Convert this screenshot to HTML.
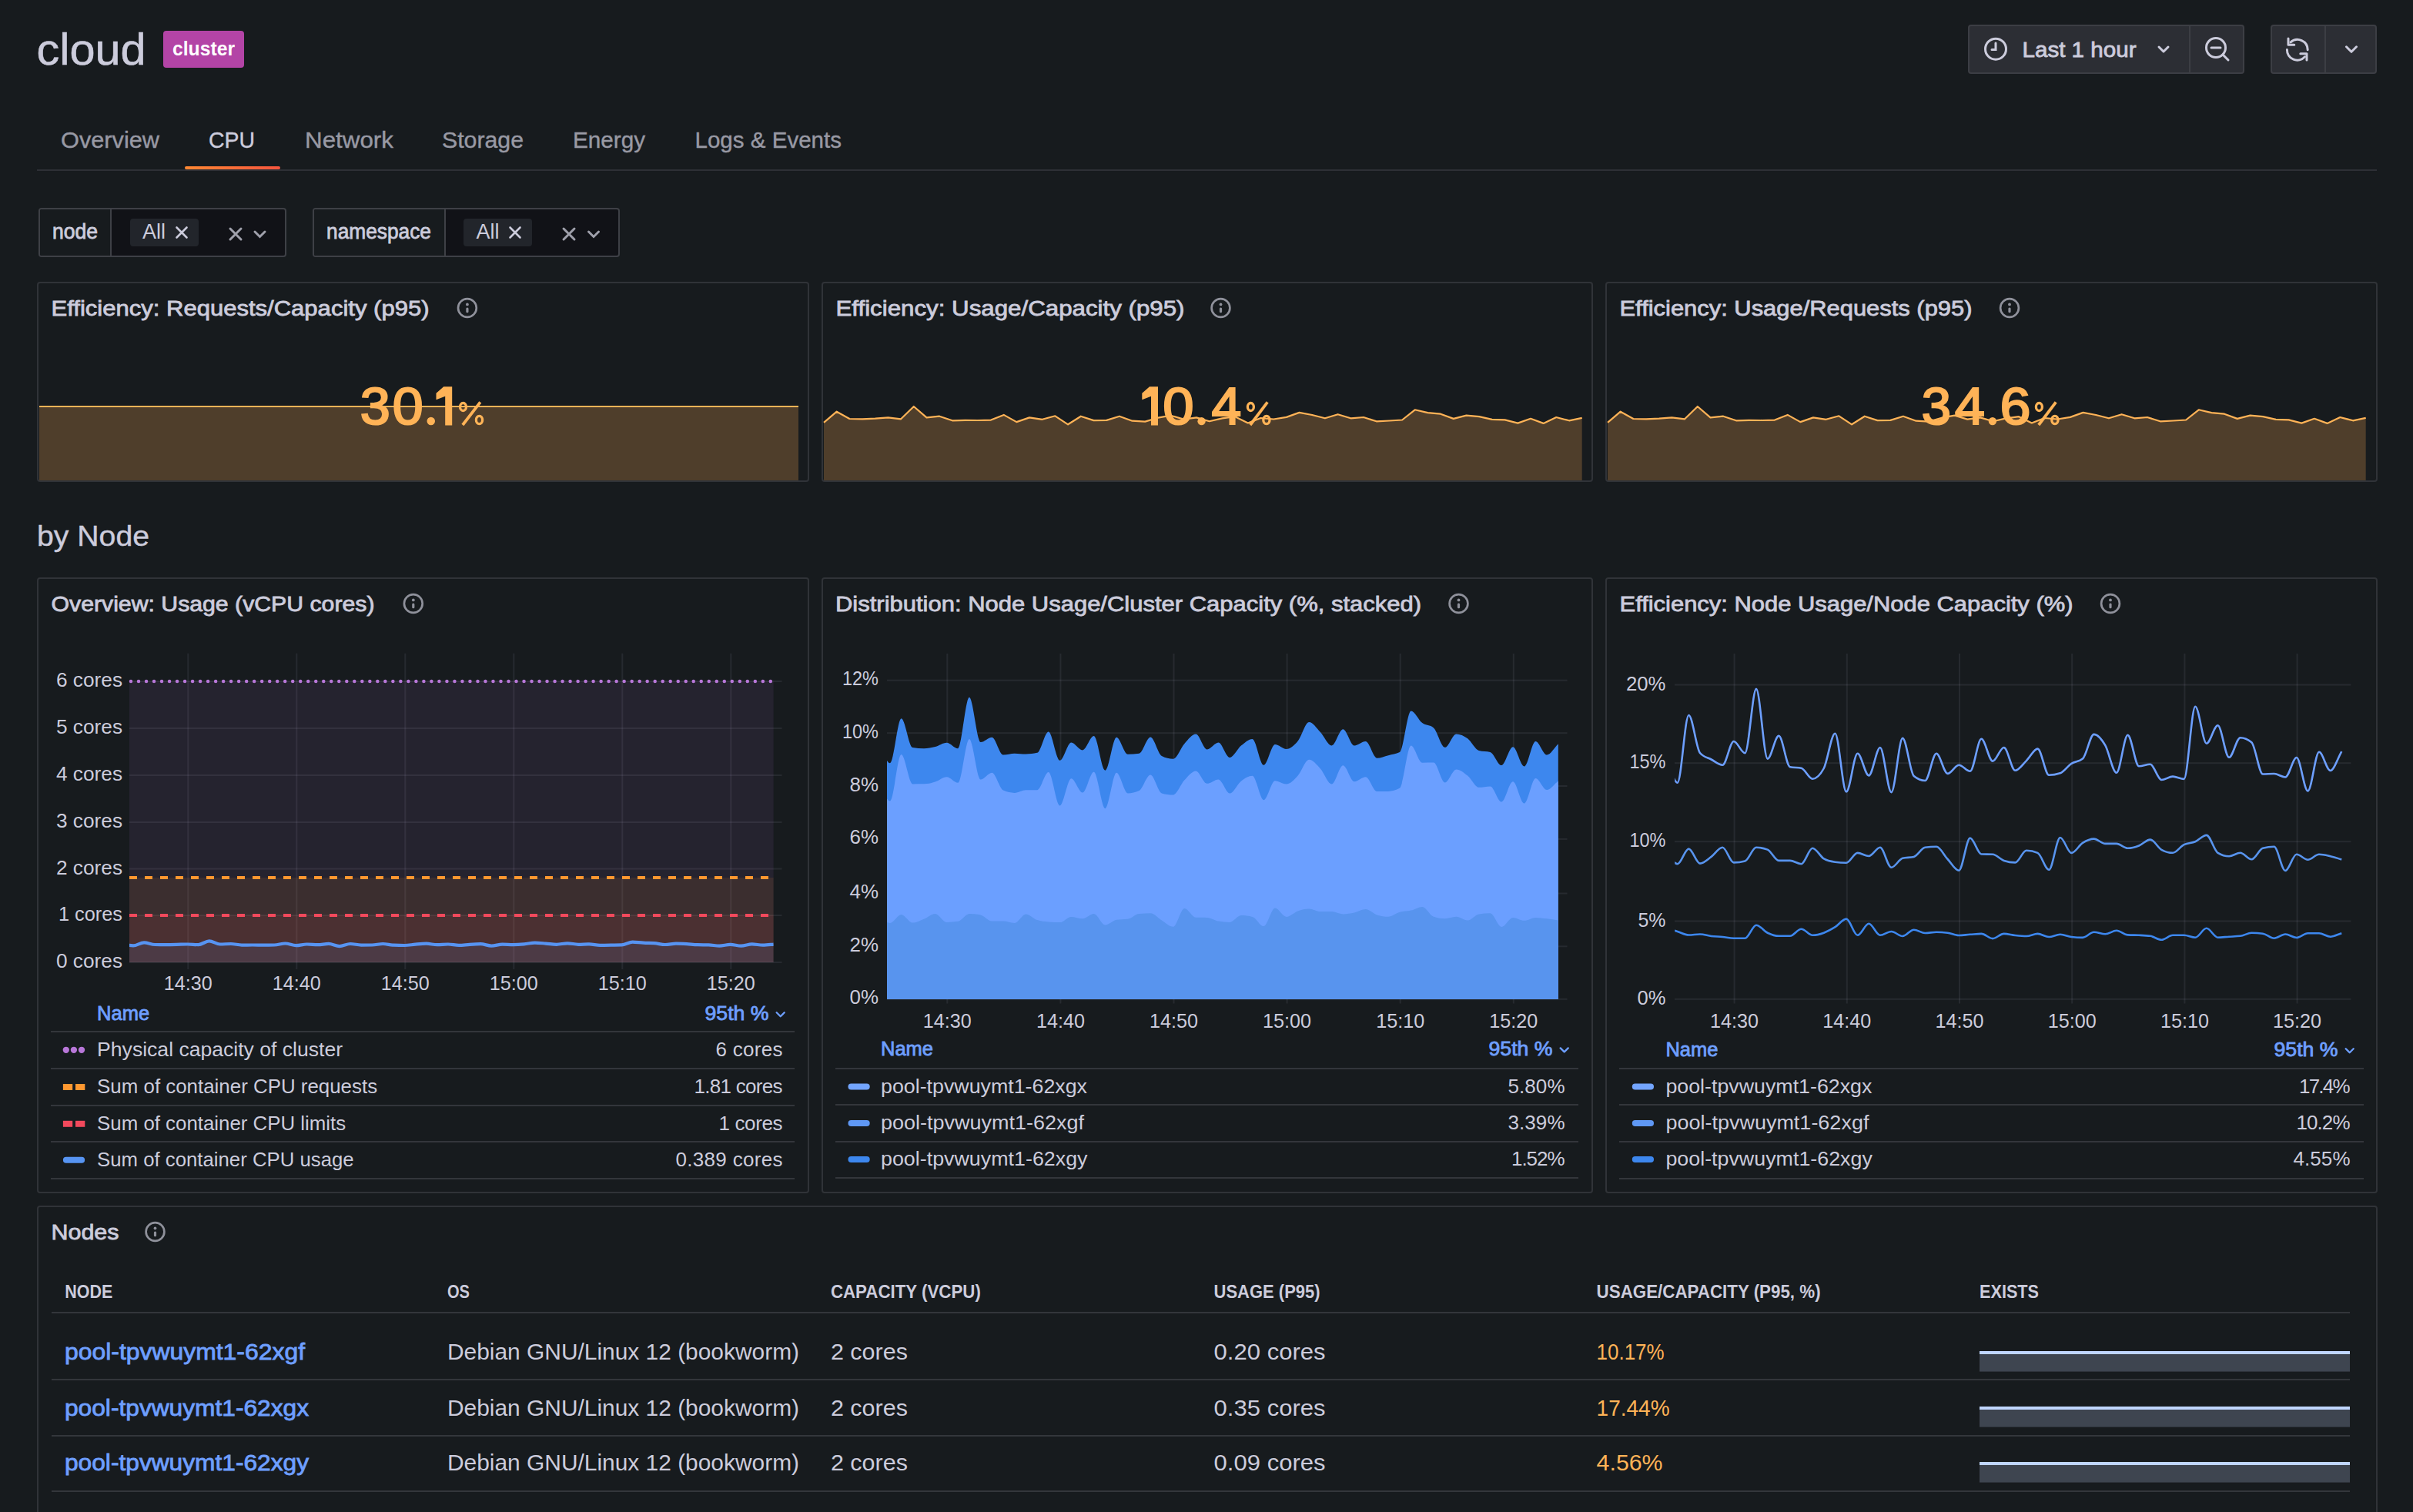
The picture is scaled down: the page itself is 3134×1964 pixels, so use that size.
<!DOCTYPE html>
<html><head><meta charset="utf-8"><title>cloud - CPU</title>
<style>
html,body{margin:0;padding:0;background:#171b1e;width:3134px;height:1964px;overflow:hidden}
.b{position:absolute;box-sizing:border-box}
svg{position:absolute;left:0;top:0}
text{font-family:"Liberation Sans",sans-serif}
</style></head><body>
<div class="b" style="left:212px;top:40px;width:105px;height:48px;border-radius:4px;background:#b344a6;"></div><div class="b" style="left:2556px;top:32px;width:359px;height:64px;border-radius:4px;border:2px solid #3c3e44;background:#2c2e34;"></div><div class="b" style="left:2843px;top:34px;width:2px;height:60px;background:#3c3e44"></div><div class="b" style="left:2949px;top:32px;width:138px;height:64px;border-radius:4px;border:2px solid #3c3e44;background:#2c2e34;"></div><div class="b" style="left:3019px;top:34px;width:2px;height:60px;background:#3c3e44"></div><div class="b" style="left:48px;top:220px;width:3039px;height:2px;background:#2e3036"></div><div class="b" style="left:240px;top:216px;width:124px;height:4px;border-radius:2px;background:linear-gradient(90deg,#ff8833,#f5553e)"></div><div class="b" style="left:50px;top:270px;width:322px;height:64px;border-radius:4px;border:2px solid #3e4046;background:#111217;"></div><div class="b" style="left:52px;top:272px;width:91px;height:60px;background:#171b1e;border-radius:2px 0 0 2px"></div><div class="b" style="left:143px;top:272px;width:2px;height:60px;background:#3e4046"></div><div class="b" style="left:169px;top:284px;width:89px;height:36px;border-radius:4px;background:#22252b;"></div><div class="b" style="left:406px;top:270px;width:399px;height:64px;border-radius:4px;border:2px solid #3e4046;background:#111217;"></div><div class="b" style="left:408px;top:272px;width:169px;height:60px;background:#171b1e;border-radius:2px 0 0 2px"></div><div class="b" style="left:577px;top:272px;width:2px;height:60px;background:#3e4046"></div><div class="b" style="left:602px;top:284px;width:89px;height:36px;border-radius:4px;background:#22252b;"></div><div class="b" style="left:48px;top:366px;width:1003px;height:260px;border-radius:4px;border:2px solid #303338;"></div><div class="b" style="left:1067px;top:366px;width:1002px;height:260px;border-radius:4px;border:2px solid #303338;"></div><div class="b" style="left:2085px;top:366px;width:1003px;height:260px;border-radius:4px;border:2px solid #303338;"></div><div class="b" style="left:48px;top:750px;width:1003px;height:800px;border-radius:4px;border:2px solid #303338;"></div><div class="b" style="left:1067px;top:750px;width:1002px;height:800px;border-radius:4px;border:2px solid #303338;"></div><div class="b" style="left:2085px;top:750px;width:1003px;height:800px;border-radius:4px;border:2px solid #303338;"></div><div class="b" style="left:48px;top:1566px;width:3040px;height:434px;border-radius:4px;border:2px solid #303338;"></div>
<svg width="3134" height="1964" viewBox="0 0 3134 1964">
<text x="47.5" y="84.3" font-size="58" fill="#ccccdc" textLength="142.0" lengthAdjust="spacingAndGlyphs" stroke="#ccccdc" stroke-width="0.6">cloud</text>
<text x="224.0" y="72.0" font-size="25" fill="#ffffff" font-weight="700" textLength="81.0" lengthAdjust="spacingAndGlyphs">cluster</text>
<g fill="none" stroke="#ccccdc" stroke-width="3" stroke-linecap="round"><circle cx="2592" cy="63.7" r="13.5"/><path d="M2592,56 V64.5 H2587"/></g>
<text x="2626.5" y="74.3" font-size="28" fill="#ccccdc" textLength="148.0" lengthAdjust="spacingAndGlyphs" stroke="#ccccdc" stroke-width="0.8">Last 1 hour</text>
<g fill="none" stroke="#ccccdc" stroke-width="3" stroke-linecap="round" stroke-linejoin="round"><path d="M2804,61 L2810,67 L2816,61"/><circle cx="2878" cy="62" r="12.5"/><path d="M2872,62 H2884 M2887,71 L2894,78"/><path d="M3047.5,60.8 L3054,67.3 L3060.5,60.8"/><path d="M2975,54.8 A13.3,13.3 0 0 1 2997.2,64.8 M2970.4,64.5 A13.3,13.3 0 0 0 2993.5,73.8"/><path d="M2972,50 V58.2 H2979.8 M2987.8,69.8 H2996 V78"/></g>
<text x="79.0" y="192.2" font-size="30" fill="#9899a4" textLength="128.0" lengthAdjust="spacingAndGlyphs" stroke="#9899a4" stroke-width="0.4">Overview</text>
<text x="271.0" y="192.2" font-size="30" fill="#ccccdc" textLength="60.0" lengthAdjust="spacingAndGlyphs" stroke="#ccccdc" stroke-width="0.4">CPU</text>
<text x="396.0" y="192.2" font-size="30" fill="#9899a4" textLength="115.0" lengthAdjust="spacingAndGlyphs" stroke="#9899a4" stroke-width="0.4">Network</text>
<text x="574.0" y="192.2" font-size="30" fill="#9899a4" textLength="106.0" lengthAdjust="spacingAndGlyphs" stroke="#9899a4" stroke-width="0.4">Storage</text>
<text x="744.0" y="192.2" font-size="30" fill="#9899a4" textLength="94.0" lengthAdjust="spacingAndGlyphs" stroke="#9899a4" stroke-width="0.4">Energy</text>
<text x="902.5" y="192.2" font-size="30" fill="#9899a4" textLength="190.5" lengthAdjust="spacingAndGlyphs" stroke="#9899a4" stroke-width="0.4">Logs &amp; Events</text>
<text x="68.0" y="310.0" font-size="28" fill="#ccccdc" textLength="59.0" lengthAdjust="spacingAndGlyphs" stroke="#ccccdc" stroke-width="0.8">node</text>
<text x="185.0" y="310.0" font-size="28" fill="#ccccdc" textLength="30.0" lengthAdjust="spacingAndGlyphs">All</text>
<g stroke="#ccccdc" stroke-width="2.6" stroke-linecap="round"><path d="M229.5,295.5 l13,13 M242.5,295.5 l-13,13"/></g>
<g stroke="#9fa0ab" stroke-width="3" stroke-linecap="round" fill="none"><path d="M299,297 l14,14 M313,297 l-14,14"/><path d="M331,301 l6.5,6.5 l6.5,-6.5"/></g>
<text x="424.0" y="310.0" font-size="28" fill="#ccccdc" textLength="136.0" lengthAdjust="spacingAndGlyphs" stroke="#ccccdc" stroke-width="0.8">namespace</text>
<text x="618.5" y="310.0" font-size="28" fill="#ccccdc" textLength="30.0" lengthAdjust="spacingAndGlyphs">All</text>
<g stroke="#ccccdc" stroke-width="2.6" stroke-linecap="round"><path d="M662.5,295.5 l13,13 M675.5,295.5 l-13,13"/></g>
<g stroke="#9fa0ab" stroke-width="3" stroke-linecap="round" fill="none"><path d="M732,297 l14,14 M746,297 l-14,14"/><path d="M764.5,301 l6.5,6.5 l6.5,-6.5"/></g>
<text x="66.5" y="410.0" font-size="28" fill="#ccccdc" textLength="491.0" lengthAdjust="spacingAndGlyphs" stroke="#ccccdc" stroke-width="0.8">Efficiency: Requests/Capacity (p95)</text>
<g stroke="#8f919b" fill="none"><circle cx="606.9" cy="400" r="11.9" stroke-width="2.7"/></g><circle cx="606.9" cy="395.4" r="1.9" fill="#8f919b"/><rect x="605.3" y="399.4" width="3.2" height="6.8" rx="1.5" fill="#8f919b"/>
<path d="M51,624 L51,528 L1037,528 L1037,624 Z" fill="#4f3e2b"/><path d="M51,528 L1037,528" fill="none" stroke="#ffb357" stroke-width="2.2" stroke-linejoin="round"/>
<text x="467.83" y="551.2" font-size="67.9" fill="#ffb357" stroke="#ffb357" stroke-width="2.2" textLength="39.07" lengthAdjust="spacingAndGlyphs">3</text>
<text x="509.80" y="551.2" font-size="67.9" fill="#ffb357" stroke="#ffb357" stroke-width="2.2" textLength="39.91" lengthAdjust="spacingAndGlyphs">0</text>
<circle cx="559.75" cy="547.05" r="5.25" fill="#ffb357"/>
<path d="M587.2,502.3 L587.2,552.5 L578.2,552.5 L578.2,514.8 L566.5,519.3 L566.5,510.8 L576.2,502.3 Z" fill="#ffb357"/>
<g fill="none" stroke="#ffb357"><ellipse cx="601.50" cy="528.50" rx="4" ry="5" stroke-width="3.3"/><ellipse cx="622.50" cy="545.50" rx="4.1" ry="5.2" stroke-width="3.3"/><path d="M623.80,522.4 L600.90,552.0" stroke-width="3.8"/></g>
<text x="1085.5" y="410.0" font-size="28" fill="#ccccdc" textLength="453.0" lengthAdjust="spacingAndGlyphs" stroke="#ccccdc" stroke-width="0.8">Efficiency: Usage/Capacity (p95)</text>
<g stroke="#8f919b" fill="none"><circle cx="1585.5" cy="400" r="11.9" stroke-width="2.7"/></g><circle cx="1585.5" cy="395.4" r="1.9" fill="#8f919b"/><rect x="1583.9" y="399.4" width="3.2" height="6.8" rx="1.5" fill="#8f919b"/>
<path d="M1070.0,548.9 L1086.7,534.7 L1103.4,544.0 L1120.1,544.3 L1136.8,543.7 L1153.5,542.4 L1170.1,544.3 L1186.8,528.0 L1203.5,542.3 L1220.2,540.7 L1236.9,546.3 L1253.6,545.8 L1270.3,546.0 L1287.0,545.6 L1303.7,538.9 L1320.3,548.1 L1337.0,542.4 L1353.7,544.8 L1370.4,540.3 L1387.1,551.3 L1403.8,540.7 L1420.5,546.1 L1437.2,545.9 L1453.9,540.7 L1470.6,546.7 L1487.2,547.6 L1503.9,542.7 L1520.6,539.7 L1537.3,544.6 L1554.0,542.4 L1570.7,547.2 L1587.4,543.4 L1604.1,541.2 L1620.8,549.5 L1637.5,543.0 L1654.2,544.5 L1670.8,541.9 L1687.5,535.9 L1704.2,539.0 L1720.9,543.3 L1737.6,538.2 L1754.3,543.3 L1771.0,542.0 L1787.7,547.3 L1804.4,546.5 L1821.1,545.5 L1837.7,532.3 L1854.4,536.1 L1871.1,537.7 L1887.8,543.9 L1904.5,539.6 L1921.2,541.1 L1937.9,544.9 L1954.6,545.4 L1971.3,549.6 L1988.0,543.8 L2004.6,549.9 L2021.3,542.0 L2038.0,546.3 L2054.7,542.8 L2054.7,624 L1070.0,624 Z" fill="#4f3e2b"/><path d="M1070.0,548.9 L1086.7,534.7 L1103.4,544.0 L1120.1,544.3 L1136.8,543.7 L1153.5,542.4 L1170.1,544.3 L1186.8,528.0 L1203.5,542.3 L1220.2,540.7 L1236.9,546.3 L1253.6,545.8 L1270.3,546.0 L1287.0,545.6 L1303.7,538.9 L1320.3,548.1 L1337.0,542.4 L1353.7,544.8 L1370.4,540.3 L1387.1,551.3 L1403.8,540.7 L1420.5,546.1 L1437.2,545.9 L1453.9,540.7 L1470.6,546.7 L1487.2,547.6 L1503.9,542.7 L1520.6,539.7 L1537.3,544.6 L1554.0,542.4 L1570.7,547.2 L1587.4,543.4 L1604.1,541.2 L1620.8,549.5 L1637.5,543.0 L1654.2,544.5 L1670.8,541.9 L1687.5,535.9 L1704.2,539.0 L1720.9,543.3 L1737.6,538.2 L1754.3,543.3 L1771.0,542.0 L1787.7,547.3 L1804.4,546.5 L1821.1,545.5 L1837.7,532.3 L1854.4,536.1 L1871.1,537.7 L1887.8,543.9 L1904.5,539.6 L1921.2,541.1 L1937.9,544.9 L1954.6,545.4 L1971.3,549.6 L1988.0,543.8 L2004.6,549.9 L2021.3,542.0 L2038.0,546.3 L2054.7,542.8" fill="none" stroke="#ffb357" stroke-width="2.2" stroke-linejoin="round"/>
<path d="M1504,502.3 L1504,552.5 L1495,552.5 L1495,514.8 L1483.3,519.3 L1483.3,510.8 L1493,502.3 Z" fill="#ffb357"/>
<text x="1510.18" y="551.2" font-size="67.9" fill="#ffb357" stroke="#ffb357" stroke-width="2.2" textLength="40.26" lengthAdjust="spacingAndGlyphs">0</text>
<circle cx="1560.55" cy="547.15" r="5.15" fill="#ffb357"/>
<text x="1573.50" y="551.2" font-size="67.9" fill="#ffb357" stroke="#ffb357" stroke-width="2.2" textLength="38.73" lengthAdjust="spacingAndGlyphs">4</text>
<g fill="none" stroke="#ffb357"><ellipse cx="1624.40" cy="528.50" rx="4" ry="5" stroke-width="3.3"/><ellipse cx="1644.90" cy="545.50" rx="4.1" ry="5.2" stroke-width="3.3"/><path d="M1646.20,522.4 L1623.80,552.0" stroke-width="3.8"/></g>
<text x="2103.5" y="410.0" font-size="28" fill="#ccccdc" textLength="458.0" lengthAdjust="spacingAndGlyphs" stroke="#ccccdc" stroke-width="0.8">Efficiency: Usage/Requests (p95)</text>
<g stroke="#8f919b" fill="none"><circle cx="2610" cy="400" r="11.9" stroke-width="2.7"/></g><circle cx="2610" cy="395.4" r="1.9" fill="#8f919b"/><rect x="2608.4" y="399.4" width="3.2" height="6.8" rx="1.5" fill="#8f919b"/>
<path d="M2088.0,548.9 L2104.7,534.7 L2121.4,544.0 L2138.1,544.3 L2154.8,543.7 L2171.4,542.4 L2188.1,544.3 L2204.8,528.0 L2221.5,542.3 L2238.2,540.7 L2254.9,546.3 L2271.6,545.8 L2288.3,546.0 L2305.0,545.6 L2321.7,538.9 L2338.3,548.1 L2355.0,542.4 L2371.7,544.8 L2388.4,540.3 L2405.1,551.3 L2421.8,540.7 L2438.5,546.1 L2455.2,545.9 L2471.9,540.7 L2488.6,546.7 L2505.2,547.6 L2521.9,542.7 L2538.6,539.7 L2555.3,544.6 L2572.0,542.4 L2588.7,547.2 L2605.4,543.4 L2622.1,541.2 L2638.8,549.5 L2655.5,543.0 L2672.2,544.5 L2688.8,541.9 L2705.5,535.9 L2722.2,539.0 L2738.9,543.3 L2755.6,538.2 L2772.3,543.3 L2789.0,542.0 L2805.7,547.3 L2822.4,546.5 L2839.1,545.5 L2855.7,532.3 L2872.4,536.1 L2889.1,537.7 L2905.8,543.9 L2922.5,539.6 L2939.2,541.1 L2955.9,544.9 L2972.6,545.4 L2989.3,549.6 L3005.9,543.8 L3022.6,549.9 L3039.3,542.0 L3056.0,546.3 L3072.7,542.8 L3072.7,624 L2088.0,624 Z" fill="#4f3e2b"/><path d="M2088.0,548.9 L2104.7,534.7 L2121.4,544.0 L2138.1,544.3 L2154.8,543.7 L2171.4,542.4 L2188.1,544.3 L2204.8,528.0 L2221.5,542.3 L2238.2,540.7 L2254.9,546.3 L2271.6,545.8 L2288.3,546.0 L2305.0,545.6 L2321.7,538.9 L2338.3,548.1 L2355.0,542.4 L2371.7,544.8 L2388.4,540.3 L2405.1,551.3 L2421.8,540.7 L2438.5,546.1 L2455.2,545.9 L2471.9,540.7 L2488.6,546.7 L2505.2,547.6 L2521.9,542.7 L2538.6,539.7 L2555.3,544.6 L2572.0,542.4 L2588.7,547.2 L2605.4,543.4 L2622.1,541.2 L2638.8,549.5 L2655.5,543.0 L2672.2,544.5 L2688.8,541.9 L2705.5,535.9 L2722.2,539.0 L2738.9,543.3 L2755.6,538.2 L2772.3,543.3 L2789.0,542.0 L2805.7,547.3 L2822.4,546.5 L2839.1,545.5 L2855.7,532.3 L2872.4,536.1 L2889.1,537.7 L2905.8,543.9 L2922.5,539.6 L2939.2,541.1 L2955.9,544.9 L2972.6,545.4 L2989.3,549.6 L3005.9,543.8 L3022.6,549.9 L3039.3,542.0 L3056.0,546.3 L3072.7,542.8" fill="none" stroke="#ffb357" stroke-width="2.2" stroke-linejoin="round"/>
<text x="2495.89" y="551.2" font-size="67.9" fill="#ffb357" stroke="#ffb357" stroke-width="2.2" textLength="38.25" lengthAdjust="spacingAndGlyphs">3</text>
<text x="2538.68" y="551.2" font-size="67.9" fill="#ffb357" stroke="#ffb357" stroke-width="2.2" textLength="39.17" lengthAdjust="spacingAndGlyphs">4</text>
<circle cx="2587.90" cy="547.10" r="5.20" fill="#ffb357"/>
<text x="2597.54" y="551.2" font-size="67.9" fill="#ffb357" stroke="#ffb357" stroke-width="2.2" textLength="39.93" lengthAdjust="spacingAndGlyphs">6</text>
<g fill="none" stroke="#ffb357"><ellipse cx="2648.40" cy="528.50" rx="4" ry="5" stroke-width="3.3"/><ellipse cx="2668.90" cy="545.50" rx="4.1" ry="5.2" stroke-width="3.3"/><path d="M2670.20,522.4 L2647.80,552.0" stroke-width="3.8"/></g>
<text x="48.0" y="709.4" font-size="37" fill="#ccccdc" textLength="146.0" lengthAdjust="spacingAndGlyphs" stroke="#ccccdc" stroke-width="0.4">by Node</text>
<text x="66.5" y="794.0" font-size="28" fill="#ccccdc" textLength="420.0" lengthAdjust="spacingAndGlyphs" stroke="#ccccdc" stroke-width="0.8">Overview: Usage (vCPU cores)</text>
<g stroke="#8f919b" fill="none"><circle cx="536.8" cy="784" r="11.9" stroke-width="2.7"/></g><circle cx="536.8" cy="779.4" r="1.9" fill="#8f919b"/><rect x="535.1999999999999" y="783.4" width="3.2" height="6.8" rx="1.5" fill="#8f919b"/>
<text x="1085.0" y="794.0" font-size="28" fill="#ccccdc" textLength="761.0" lengthAdjust="spacingAndGlyphs" stroke="#ccccdc" stroke-width="0.8">Distribution: Node Usage/Cluster Capacity (%, stacked)</text>
<g stroke="#8f919b" fill="none"><circle cx="1894.5" cy="784" r="11.9" stroke-width="2.7"/></g><circle cx="1894.5" cy="779.4" r="1.9" fill="#8f919b"/><rect x="1892.9" y="783.4" width="3.2" height="6.8" rx="1.5" fill="#8f919b"/>
<text x="2103.5" y="794.0" font-size="28" fill="#ccccdc" textLength="589.0" lengthAdjust="spacingAndGlyphs" stroke="#ccccdc" stroke-width="0.8">Efficiency: Node Usage/Node Capacity (%)</text>
<g stroke="#8f919b" fill="none"><circle cx="2741" cy="784" r="11.9" stroke-width="2.7"/></g><circle cx="2741" cy="779.4" r="1.9" fill="#8f919b"/><rect x="2739.4" y="783.4" width="3.2" height="6.8" rx="1.5" fill="#8f919b"/>
<rect x="168" y="884.0" width="847.5" height="2" fill="rgba(204,204,220,0.09)"/>
<rect x="168" y="945.0" width="847.5" height="2" fill="rgba(204,204,220,0.09)"/>
<rect x="168" y="1006.0" width="847.5" height="2" fill="rgba(204,204,220,0.09)"/>
<rect x="168" y="1067.0" width="847.5" height="2" fill="rgba(204,204,220,0.09)"/>
<rect x="168" y="1127.5" width="847.5" height="2" fill="rgba(204,204,220,0.09)"/>
<rect x="168" y="1188.0" width="847.5" height="2" fill="rgba(204,204,220,0.09)"/>
<rect x="168" y="1249.0" width="847.5" height="2" fill="rgba(204,204,220,0.09)"/>
<rect x="243.3" y="848.7" width="2" height="410.3" fill="rgba(204,204,220,0.09)"/>
<rect x="384.3" y="848.7" width="2" height="410.3" fill="rgba(204,204,220,0.09)"/>
<rect x="525.3" y="848.7" width="2" height="410.3" fill="rgba(204,204,220,0.09)"/>
<rect x="666.3" y="848.7" width="2" height="410.3" fill="rgba(204,204,220,0.09)"/>
<rect x="807.3" y="848.7" width="2" height="410.3" fill="rgba(204,204,220,0.09)"/>
<rect x="948.3" y="848.7" width="2" height="410.3" fill="rgba(204,204,220,0.09)"/>
<text x="159.0" y="892.0" font-size="26" fill="#ccccdc" text-anchor="end" textLength="86.0" lengthAdjust="spacingAndGlyphs">6 cores</text>
<text x="159.0" y="953.0" font-size="26" fill="#ccccdc" text-anchor="end" textLength="86.0" lengthAdjust="spacingAndGlyphs">5 cores</text>
<text x="159.0" y="1014.0" font-size="26" fill="#ccccdc" text-anchor="end" textLength="86.0" lengthAdjust="spacingAndGlyphs">4 cores</text>
<text x="159.0" y="1075.0" font-size="26" fill="#ccccdc" text-anchor="end" textLength="86.0" lengthAdjust="spacingAndGlyphs">3 cores</text>
<text x="159.0" y="1135.5" font-size="26" fill="#ccccdc" text-anchor="end" textLength="86.0" lengthAdjust="spacingAndGlyphs">2 cores</text>
<text x="159.0" y="1196.0" font-size="26" fill="#ccccdc" text-anchor="end" textLength="83.0" lengthAdjust="spacingAndGlyphs">1 cores</text>
<text x="159.0" y="1257.0" font-size="26" fill="#ccccdc" text-anchor="end" textLength="86.0" lengthAdjust="spacingAndGlyphs">0 cores</text>
<text x="244.3" y="1286.4" font-size="26" fill="#ccccdc" text-anchor="middle" textLength="63.0" lengthAdjust="spacingAndGlyphs">14:30</text>
<text x="385.3" y="1286.4" font-size="26" fill="#ccccdc" text-anchor="middle" textLength="63.0" lengthAdjust="spacingAndGlyphs">14:40</text>
<text x="526.3" y="1286.4" font-size="26" fill="#ccccdc" text-anchor="middle" textLength="63.0" lengthAdjust="spacingAndGlyphs">14:50</text>
<text x="667.3" y="1286.4" font-size="26" fill="#ccccdc" text-anchor="middle" textLength="63.0" lengthAdjust="spacingAndGlyphs">15:00</text>
<text x="808.3" y="1286.4" font-size="26" fill="#ccccdc" text-anchor="middle" textLength="63.0" lengthAdjust="spacingAndGlyphs">15:10</text>
<text x="949.3" y="1286.4" font-size="26" fill="#ccccdc" text-anchor="middle" textLength="63.0" lengthAdjust="spacingAndGlyphs">15:20</text>
<rect x="168" y="885" width="836.6" height="365" fill="#b877d9" fill-opacity="0.09"/>
<rect x="168" y="1140" width="836.6" height="110" fill="#ff9830" fill-opacity="0.1"/>
<rect x="168" y="1189" width="836.6" height="61" fill="#f2495c" fill-opacity="0.09"/>
<clipPath id="c1"><rect x="168" y="840" width="836.6" height="420"/></clipPath>
<g clip-path="url(#c1)"><path d="M158.9,1226.5 C163.6,1227.1 168.3,1228.4 173.0,1228.4 C177.7,1228.4 182.4,1224.3 187.1,1224.3 C191.8,1224.3 196.5,1226.9 201.2,1227.0 C205.9,1227.0 210.6,1227.1 215.3,1227.1 C220.0,1227.1 224.7,1227.0 229.4,1226.9 C234.1,1226.8 238.8,1226.5 243.5,1226.5 C248.2,1226.5 252.9,1227.1 257.6,1227.1 C262.3,1227.1 267.0,1222.4 271.7,1222.4 C276.4,1222.4 281.1,1226.5 285.8,1226.5 C290.5,1226.5 295.2,1226.0 299.9,1226.0 C304.6,1226.0 309.3,1227.6 314.0,1227.6 C318.7,1227.6 323.4,1227.5 328.1,1227.5 C332.8,1227.5 337.5,1227.6 342.2,1227.6 C346.9,1227.6 351.6,1227.5 356.3,1227.5 C361.0,1227.4 365.7,1225.5 370.4,1225.5 C375.1,1225.5 379.8,1228.2 384.5,1228.2 C389.2,1228.2 393.9,1226.5 398.6,1226.5 C403.3,1226.5 408.0,1227.2 412.7,1227.2 C417.4,1227.2 422.1,1225.9 426.8,1225.9 C431.5,1225.9 436.2,1229.1 440.9,1229.1 C445.6,1229.1 450.3,1226.0 455.0,1226.0 C459.7,1226.0 464.4,1227.6 469.1,1227.6 C473.8,1227.6 478.5,1227.6 483.2,1227.5 C487.9,1227.5 492.6,1226.0 497.3,1226.0 C502.0,1226.0 506.7,1227.6 511.4,1227.7 C516.1,1227.9 520.8,1228.0 525.5,1228.0 C530.2,1228.0 534.9,1227.0 539.6,1226.6 C544.3,1226.2 549.0,1225.7 553.7,1225.7 C558.4,1225.7 563.1,1227.2 567.8,1227.2 C572.5,1227.2 577.2,1226.5 581.9,1226.5 C586.6,1226.5 591.3,1227.9 596.0,1227.9 C600.7,1227.9 605.4,1227.1 610.1,1226.8 C614.8,1226.5 619.5,1226.2 624.2,1226.2 C628.9,1226.2 633.6,1228.6 638.3,1228.6 C643.0,1228.6 647.7,1226.7 652.4,1226.7 C657.1,1226.7 661.8,1227.1 666.5,1227.1 C671.2,1227.1 675.9,1226.8 680.6,1226.4 C685.3,1226.0 690.0,1224.6 694.7,1224.6 C699.4,1224.6 704.1,1225.2 708.8,1225.6 C713.5,1225.9 718.2,1226.8 722.9,1226.8 C727.6,1226.8 732.3,1225.3 737.0,1225.3 C741.7,1225.3 746.4,1226.8 751.1,1226.8 C755.8,1226.8 760.5,1226.4 765.2,1226.4 C769.9,1226.4 774.6,1227.9 779.3,1227.9 C784.0,1227.9 788.7,1227.8 793.4,1227.7 C798.1,1227.6 802.8,1227.6 807.5,1227.4 C812.2,1227.2 816.9,1223.6 821.6,1223.6 C826.3,1223.6 831.0,1224.5 835.7,1224.7 C840.4,1225.0 845.1,1224.9 849.8,1225.2 C854.5,1225.5 859.2,1227.0 863.9,1227.0 C868.6,1227.0 873.3,1225.7 878.0,1225.7 C882.7,1225.7 887.4,1225.9 892.1,1226.1 C896.8,1226.4 901.5,1227.2 906.2,1227.2 C910.9,1227.3 915.6,1227.3 920.3,1227.4 C925.0,1227.5 929.7,1228.6 934.4,1228.6 C939.1,1228.6 943.8,1226.9 948.5,1226.9 C953.2,1226.9 957.9,1228.7 962.6,1228.7 C967.3,1228.7 972.0,1226.4 976.7,1226.4 C981.4,1226.4 986.1,1227.6 990.8,1227.6 C995.5,1227.6 1000.2,1227.0 1004.9,1226.6 L1004.9,1250 L158.9,1250 Z" fill="#5794f2" fill-opacity="0.1"/><path d="M158.9,1226.5 C163.6,1227.1 168.3,1228.4 173.0,1228.4 C177.7,1228.4 182.4,1224.3 187.1,1224.3 C191.8,1224.3 196.5,1226.9 201.2,1227.0 C205.9,1227.0 210.6,1227.1 215.3,1227.1 C220.0,1227.1 224.7,1227.0 229.4,1226.9 C234.1,1226.8 238.8,1226.5 243.5,1226.5 C248.2,1226.5 252.9,1227.1 257.6,1227.1 C262.3,1227.1 267.0,1222.4 271.7,1222.4 C276.4,1222.4 281.1,1226.5 285.8,1226.5 C290.5,1226.5 295.2,1226.0 299.9,1226.0 C304.6,1226.0 309.3,1227.6 314.0,1227.6 C318.7,1227.6 323.4,1227.5 328.1,1227.5 C332.8,1227.5 337.5,1227.6 342.2,1227.6 C346.9,1227.6 351.6,1227.5 356.3,1227.5 C361.0,1227.4 365.7,1225.5 370.4,1225.5 C375.1,1225.5 379.8,1228.2 384.5,1228.2 C389.2,1228.2 393.9,1226.5 398.6,1226.5 C403.3,1226.5 408.0,1227.2 412.7,1227.2 C417.4,1227.2 422.1,1225.9 426.8,1225.9 C431.5,1225.9 436.2,1229.1 440.9,1229.1 C445.6,1229.1 450.3,1226.0 455.0,1226.0 C459.7,1226.0 464.4,1227.6 469.1,1227.6 C473.8,1227.6 478.5,1227.6 483.2,1227.5 C487.9,1227.5 492.6,1226.0 497.3,1226.0 C502.0,1226.0 506.7,1227.6 511.4,1227.7 C516.1,1227.9 520.8,1228.0 525.5,1228.0 C530.2,1228.0 534.9,1227.0 539.6,1226.6 C544.3,1226.2 549.0,1225.7 553.7,1225.7 C558.4,1225.7 563.1,1227.2 567.8,1227.2 C572.5,1227.2 577.2,1226.5 581.9,1226.5 C586.6,1226.5 591.3,1227.9 596.0,1227.9 C600.7,1227.9 605.4,1227.1 610.1,1226.8 C614.8,1226.5 619.5,1226.2 624.2,1226.2 C628.9,1226.2 633.6,1228.6 638.3,1228.6 C643.0,1228.6 647.7,1226.7 652.4,1226.7 C657.1,1226.7 661.8,1227.1 666.5,1227.1 C671.2,1227.1 675.9,1226.8 680.6,1226.4 C685.3,1226.0 690.0,1224.6 694.7,1224.6 C699.4,1224.6 704.1,1225.2 708.8,1225.6 C713.5,1225.9 718.2,1226.8 722.9,1226.8 C727.6,1226.8 732.3,1225.3 737.0,1225.3 C741.7,1225.3 746.4,1226.8 751.1,1226.8 C755.8,1226.8 760.5,1226.4 765.2,1226.4 C769.9,1226.4 774.6,1227.9 779.3,1227.9 C784.0,1227.9 788.7,1227.8 793.4,1227.7 C798.1,1227.6 802.8,1227.6 807.5,1227.4 C812.2,1227.2 816.9,1223.6 821.6,1223.6 C826.3,1223.6 831.0,1224.5 835.7,1224.7 C840.4,1225.0 845.1,1224.9 849.8,1225.2 C854.5,1225.5 859.2,1227.0 863.9,1227.0 C868.6,1227.0 873.3,1225.7 878.0,1225.7 C882.7,1225.7 887.4,1225.9 892.1,1226.1 C896.8,1226.4 901.5,1227.2 906.2,1227.2 C910.9,1227.3 915.6,1227.3 920.3,1227.4 C925.0,1227.5 929.7,1228.6 934.4,1228.6 C939.1,1228.6 943.8,1226.9 948.5,1226.9 C953.2,1226.9 957.9,1228.7 962.6,1228.7 C967.3,1228.7 972.0,1226.4 976.7,1226.4 C981.4,1226.4 986.1,1227.6 990.8,1227.6 C995.5,1227.6 1000.2,1227.0 1004.9,1226.6" fill="none" stroke="#5794f2" stroke-width="4.2"/></g>
<path d="M170,885 H1004.6" stroke="#b877d9" stroke-width="4.5" stroke-linecap="round" stroke-dasharray="0.01 10" fill="none"/>
<path d="M168,1140 H1004.6" stroke="#ff9830" stroke-width="4" stroke-dasharray="10 10" fill="none"/>
<path d="M168,1189 H1004.6" stroke="#f2495c" stroke-width="4" stroke-dasharray="10 10" fill="none"/>
<text x="126.1" y="1324.8" font-size="25" fill="#6e9fff" textLength="68.0" lengthAdjust="spacingAndGlyphs" stroke="#6e9fff" stroke-width="0.8">Name</text>
<text x="998.5" y="1324.8" font-size="25" fill="#6e9fff" text-anchor="end" textLength="83.0" lengthAdjust="spacingAndGlyphs" stroke="#6e9fff" stroke-width="0.8">95th %</text>
<path d="M1008.7,1315.3 l5,5 l5,-5" stroke="#6e9fff" stroke-width="2.3" fill="none" stroke-linecap="round" stroke-linejoin="round"/>
<rect x="66" y="1339" width="966" height="2" fill="#33363b"/>
<rect x="66" y="1387" width="966" height="2" fill="#33363b"/>
<rect x="66" y="1435" width="966" height="2" fill="#33363b"/>
<rect x="66" y="1482" width="966" height="2" fill="#33363b"/>
<rect x="66" y="1530" width="966" height="2" fill="#33363b"/>
<circle cx="85.8" cy="1363.8" r="4.15" fill="#b877d9"/><circle cx="95.9" cy="1363.8" r="4.15" fill="#b877d9"/><circle cx="106.0" cy="1363.8" r="4.15" fill="#b877d9"/>
<text x="126.1" y="1371.8" font-size="26" fill="#ccccdc" textLength="319.0" lengthAdjust="spacingAndGlyphs">Physical capacity of cluster</text>
<text x="1016.5" y="1371.8" font-size="26" fill="#ccccdc" text-anchor="end" textLength="87.0" lengthAdjust="spacing">6 cores</text>
<rect x="81.9" y="1408" width="12.3" height="8" fill="#ff9830"/><rect x="98.0" y="1408" width="12.3" height="8" fill="#ff9830"/>
<text x="126.1" y="1420.0" font-size="26" fill="#ccccdc" textLength="364.0" lengthAdjust="spacingAndGlyphs">Sum of container CPU requests</text>
<text x="1016.5" y="1420.0" font-size="26" fill="#ccccdc" text-anchor="end" textLength="115.0" lengthAdjust="spacing">1.81 cores</text>
<rect x="81.9" y="1455.8" width="12.3" height="8" fill="#f2495c"/><rect x="98.0" y="1455.8" width="12.3" height="8" fill="#f2495c"/>
<text x="126.1" y="1467.8" font-size="26" fill="#ccccdc" textLength="323.0" lengthAdjust="spacingAndGlyphs">Sum of container CPU limits</text>
<text x="1016.5" y="1467.8" font-size="26" fill="#ccccdc" text-anchor="end" textLength="83.0" lengthAdjust="spacing">1 cores</text>
<rect x="81.9" y="1502.7" width="28.2" height="8" rx="4" fill="#5794f2"/>
<text x="126.1" y="1514.7" font-size="26" fill="#ccccdc" textLength="333.5" lengthAdjust="spacingAndGlyphs">Sum of container CPU usage</text>
<text x="1016.5" y="1514.7" font-size="26" fill="#ccccdc" text-anchor="end" textLength="139.0" lengthAdjust="spacing">0.389 cores</text>
<rect x="1152" y="882.7" width="883.5" height="2" fill="rgba(204,204,220,0.09)"/>
<rect x="1152" y="951.2" width="883.5" height="2" fill="rgba(204,204,220,0.09)"/>
<rect x="1152" y="1020.0" width="883.5" height="2" fill="rgba(204,204,220,0.09)"/>
<rect x="1152" y="1088.9" width="883.5" height="2" fill="rgba(204,204,220,0.09)"/>
<rect x="1152" y="1159.5" width="883.5" height="2" fill="rgba(204,204,220,0.09)"/>
<rect x="1152" y="1228.3" width="883.5" height="2" fill="rgba(204,204,220,0.09)"/>
<rect x="1152" y="1296.8" width="883.5" height="2" fill="rgba(204,204,220,0.09)"/>
<rect x="1229.3" y="849" width="2" height="454.5" fill="rgba(204,204,220,0.09)"/>
<rect x="1376.4" y="849" width="2" height="454.5" fill="rgba(204,204,220,0.09)"/>
<rect x="1523.5" y="849" width="2" height="454.5" fill="rgba(204,204,220,0.09)"/>
<rect x="1670.6" y="849" width="2" height="454.5" fill="rgba(204,204,220,0.09)"/>
<rect x="1817.7" y="849" width="2" height="454.5" fill="rgba(204,204,220,0.09)"/>
<rect x="1964.8" y="849" width="2" height="454.5" fill="rgba(204,204,220,0.09)"/>
<text x="1141.0" y="890.2" font-size="26" fill="#ccccdc" text-anchor="end" textLength="47.0" lengthAdjust="spacingAndGlyphs">12%</text>
<text x="1141.0" y="958.7" font-size="26" fill="#ccccdc" text-anchor="end" textLength="47.0" lengthAdjust="spacingAndGlyphs">10%</text>
<text x="1141.0" y="1027.5" font-size="26" fill="#ccccdc" text-anchor="end" textLength="37.5" lengthAdjust="spacingAndGlyphs">8%</text>
<text x="1141.0" y="1096.4" font-size="26" fill="#ccccdc" text-anchor="end" textLength="37.5" lengthAdjust="spacingAndGlyphs">6%</text>
<text x="1141.0" y="1167.0" font-size="26" fill="#ccccdc" text-anchor="end" textLength="37.5" lengthAdjust="spacingAndGlyphs">4%</text>
<text x="1141.0" y="1235.8" font-size="26" fill="#ccccdc" text-anchor="end" textLength="37.5" lengthAdjust="spacingAndGlyphs">2%</text>
<text x="1141.0" y="1304.3" font-size="26" fill="#ccccdc" text-anchor="end" textLength="37.5" lengthAdjust="spacingAndGlyphs">0%</text>
<text x="1230.3" y="1335.0" font-size="26" fill="#ccccdc" text-anchor="middle" textLength="63.0" lengthAdjust="spacingAndGlyphs">14:30</text>
<text x="1377.4" y="1335.0" font-size="26" fill="#ccccdc" text-anchor="middle" textLength="63.0" lengthAdjust="spacingAndGlyphs">14:40</text>
<text x="1524.5" y="1335.0" font-size="26" fill="#ccccdc" text-anchor="middle" textLength="63.0" lengthAdjust="spacingAndGlyphs">14:50</text>
<text x="1671.6" y="1335.0" font-size="26" fill="#ccccdc" text-anchor="middle" textLength="63.0" lengthAdjust="spacingAndGlyphs">15:00</text>
<text x="1818.7" y="1335.0" font-size="26" fill="#ccccdc" text-anchor="middle" textLength="63.0" lengthAdjust="spacingAndGlyphs">15:10</text>
<text x="1965.8" y="1335.0" font-size="26" fill="#ccccdc" text-anchor="middle" textLength="63.0" lengthAdjust="spacingAndGlyphs">15:20</text>
<clipPath id="c2"><rect x="1152" y="840" width="872.5" height="458"/></clipPath>
<g clip-path="url(#c2)"><path d="M1141.2,964.2 C1146.1,973.2 1151.0,991.2 1155.9,991.2 C1160.8,991.2 1165.7,933.2 1170.6,933.2 C1175.5,933.2 1180.4,970.1 1185.3,971.0 C1190.2,971.9 1195.1,972.3 1200.0,972.3 C1204.9,972.3 1209.8,971.3 1214.7,970.1 C1219.6,968.8 1224.5,964.8 1229.5,964.8 C1234.4,964.8 1239.3,972.3 1244.2,972.3 C1249.1,972.3 1254.0,905.8 1258.9,905.8 C1263.8,905.8 1268.7,964.1 1273.6,964.1 C1278.5,964.1 1283.4,957.7 1288.3,957.7 C1293.2,957.7 1298.1,980.5 1303.0,980.5 C1307.9,980.5 1312.8,978.7 1317.7,978.7 C1322.6,978.7 1327.5,979.5 1332.4,979.5 C1337.3,979.5 1342.2,978.9 1347.1,977.8 C1352.0,976.6 1356.9,950.4 1361.8,950.4 C1366.7,950.4 1371.6,987.7 1376.6,987.7 C1381.5,987.7 1386.4,964.5 1391.3,964.5 C1396.2,964.5 1401.1,974.4 1406.0,974.4 C1410.9,974.4 1415.8,956.1 1420.7,956.1 C1425.6,956.1 1430.5,1000.7 1435.4,1000.7 C1440.3,1000.7 1445.2,957.8 1450.1,957.8 C1455.0,957.8 1459.9,979.7 1464.8,979.7 C1469.7,979.7 1474.6,979.4 1479.5,978.7 C1484.4,978.0 1489.3,957.6 1494.2,957.6 C1499.1,957.6 1504.0,979.4 1508.9,982.0 C1513.8,984.5 1518.7,985.8 1523.7,985.8 C1528.6,985.8 1533.5,971.4 1538.4,966.0 C1543.3,960.6 1548.2,953.6 1553.1,953.6 C1558.0,953.6 1562.9,973.5 1567.8,973.5 C1572.7,973.5 1577.6,964.6 1582.5,964.6 C1587.4,964.6 1592.3,984.0 1597.2,984.0 C1602.1,984.0 1607.0,972.7 1611.9,968.6 C1616.8,964.6 1621.7,959.9 1626.6,959.9 C1631.5,959.9 1636.4,993.8 1641.3,993.8 C1646.2,993.8 1651.1,967.1 1656.0,967.1 C1660.9,967.1 1665.8,973.0 1670.8,973.0 C1675.7,973.0 1680.6,968.6 1685.5,962.7 C1690.4,956.9 1695.3,937.9 1700.2,937.9 C1705.1,937.9 1710.0,945.8 1714.9,950.9 C1719.8,956.0 1724.7,968.4 1729.6,968.4 C1734.5,968.4 1739.4,947.3 1744.3,947.3 C1749.2,947.3 1754.1,968.5 1759.0,968.5 C1763.9,968.5 1768.8,963.1 1773.7,963.1 C1778.6,963.1 1783.5,984.7 1788.4,984.7 C1793.3,984.7 1798.2,982.5 1803.1,981.2 C1808.0,979.9 1812.9,979.8 1817.9,977.1 C1822.8,974.3 1827.7,923.4 1832.6,923.4 C1837.5,923.4 1842.4,935.4 1847.3,939.1 C1852.2,942.7 1857.1,941.2 1862.0,945.5 C1866.9,949.8 1871.8,970.8 1876.7,970.8 C1881.6,970.8 1886.5,953.4 1891.4,953.4 C1896.3,953.4 1901.2,955.6 1906.1,959.2 C1911.0,962.8 1915.9,973.5 1920.8,974.9 C1925.7,976.2 1930.6,975.6 1935.5,976.9 C1940.4,978.3 1945.3,994.0 1950.2,994.0 C1955.1,994.0 1960.0,970.3 1965.0,970.3 C1969.9,970.3 1974.8,995.4 1979.7,995.4 C1984.6,995.4 1989.5,962.9 1994.4,962.9 C1999.3,962.9 2004.2,980.5 2009.1,980.5 C2014.0,980.5 2018.9,971.0 2023.8,966.3 L2023.8,1297.8 L1141.2,1297.8 Z" fill="#3d87ee"/><path d="M1141.2,1015.8 C1146.1,1024.1 1151.0,1040.6 1155.9,1040.6 C1160.8,1040.6 1165.7,980.1 1170.6,980.1 C1175.5,980.1 1180.4,1018.4 1185.3,1018.4 C1190.2,1018.4 1195.1,1018.4 1200.0,1018.3 C1204.9,1018.3 1209.8,1017.1 1214.7,1015.6 C1219.6,1014.1 1224.5,1009.3 1229.5,1009.3 C1234.4,1009.3 1239.3,1016.8 1244.2,1016.8 C1249.1,1016.8 1254.0,959.9 1258.9,959.9 C1263.8,959.9 1268.7,1012.6 1273.6,1012.6 C1278.5,1012.6 1283.4,1003.8 1288.3,1003.8 C1293.2,1003.8 1298.1,1024.4 1303.0,1026.6 C1307.9,1028.8 1312.8,1029.9 1317.7,1029.9 C1322.6,1029.9 1327.5,1026.2 1332.4,1026.2 C1337.3,1026.2 1342.2,1026.2 1347.1,1026.2 C1352.0,1026.2 1356.9,1003.1 1361.8,1003.1 C1366.7,1003.1 1371.6,1046.4 1376.6,1046.4 C1381.5,1046.4 1386.4,1011.2 1391.3,1011.2 C1396.2,1011.2 1401.1,1029.6 1406.0,1029.6 C1410.9,1029.6 1415.8,1002.8 1420.7,1002.8 C1425.6,1002.8 1430.5,1050.2 1435.4,1050.2 C1440.3,1050.2 1445.2,1003.8 1450.1,1003.8 C1455.0,1003.8 1459.9,1030.4 1464.8,1030.4 C1469.7,1030.4 1474.6,1029.3 1479.5,1027.0 C1484.4,1024.7 1489.3,1006.6 1494.2,1006.6 C1499.1,1006.6 1504.0,1029.1 1508.9,1030.4 C1513.8,1031.8 1518.7,1032.4 1523.7,1032.4 C1528.6,1032.4 1533.5,1018.4 1538.4,1013.3 C1543.3,1008.1 1548.2,1001.4 1553.1,1001.4 C1558.0,1001.4 1562.9,1017.8 1567.8,1017.8 C1572.7,1017.8 1577.6,1012.4 1582.5,1012.4 C1587.4,1012.4 1592.3,1030.6 1597.2,1030.6 C1602.1,1030.6 1607.0,1018.5 1611.9,1014.7 C1616.8,1010.8 1621.7,1007.7 1626.6,1007.7 C1631.5,1007.7 1636.4,1039.2 1641.3,1039.2 C1646.2,1039.2 1651.1,1014.3 1656.0,1014.3 C1660.9,1014.3 1665.8,1018.5 1670.8,1018.5 C1675.7,1018.5 1680.6,1013.0 1685.5,1007.7 C1690.4,1002.4 1695.3,986.8 1700.2,986.8 C1705.1,986.8 1710.0,993.2 1714.9,998.4 C1719.8,1003.7 1724.7,1018.5 1729.6,1018.5 C1734.5,1018.5 1739.4,994.3 1744.3,994.3 C1749.2,994.3 1754.1,1015.2 1759.0,1015.2 C1763.9,1015.2 1768.8,1009.3 1773.7,1009.3 C1778.6,1009.3 1783.5,1028.1 1788.4,1028.1 C1793.3,1028.1 1798.2,1028.1 1803.1,1027.9 C1808.0,1027.8 1812.9,1026.5 1817.9,1023.8 C1822.8,1021.1 1827.7,968.5 1832.6,968.5 C1837.5,968.5 1842.4,990.8 1847.3,990.8 C1852.2,990.8 1857.1,990.6 1862.0,990.6 C1866.9,990.6 1871.8,1016.4 1876.7,1016.4 C1881.6,1016.4 1886.5,999.5 1891.4,999.5 C1896.3,999.5 1901.2,1003.7 1906.1,1007.6 C1911.0,1011.5 1915.9,1022.8 1920.8,1022.8 C1925.7,1022.8 1930.6,1021.4 1935.5,1021.4 C1940.4,1021.4 1945.3,1041.5 1950.2,1041.5 C1955.1,1041.5 1960.0,1015.2 1965.0,1015.2 C1969.9,1015.2 1974.8,1043.6 1979.7,1043.6 C1984.6,1043.6 1989.5,1011.1 1994.4,1011.1 C1999.3,1011.1 2004.2,1026.1 2009.1,1026.1 C2014.0,1026.1 2018.9,1018.3 2023.8,1014.4 L2023.8,1297.8 L1141.2,1297.8 Z" fill="#6b9fff"/><path d="M1141.2,1192.0 C1146.1,1194.3 1151.0,1198.9 1155.9,1198.9 C1160.8,1198.9 1165.7,1187.9 1170.6,1187.9 C1175.5,1187.9 1180.4,1198.6 1185.3,1198.6 C1190.2,1198.6 1195.1,1195.6 1200.0,1193.7 C1204.9,1191.7 1209.8,1186.9 1214.7,1186.9 C1219.6,1186.9 1224.5,1197.9 1229.5,1197.9 C1234.4,1197.9 1239.3,1197.5 1244.2,1196.8 C1249.1,1196.1 1254.0,1186.9 1258.9,1186.9 C1263.8,1186.9 1268.7,1187.4 1273.6,1188.4 C1278.5,1189.5 1283.4,1196.5 1288.3,1196.5 C1293.2,1196.5 1298.1,1196.5 1303.0,1196.5 C1307.9,1196.5 1312.8,1198.9 1317.7,1198.9 C1322.6,1198.9 1327.5,1187.4 1332.4,1187.4 C1337.3,1187.4 1342.2,1193.5 1347.1,1195.1 C1352.0,1196.7 1356.9,1197.1 1361.8,1197.5 C1366.7,1197.9 1371.6,1198.1 1376.6,1198.1 C1381.5,1198.1 1386.4,1190.9 1391.3,1190.9 C1396.2,1190.9 1401.1,1193.2 1406.0,1193.2 C1410.9,1193.2 1415.8,1186.9 1420.7,1186.9 C1425.6,1186.9 1430.5,1201.5 1435.4,1201.5 C1440.3,1201.5 1445.2,1195.5 1450.1,1194.7 C1455.0,1194.0 1459.9,1194.4 1464.8,1193.7 C1469.7,1193.0 1474.6,1187.2 1479.5,1186.9 C1484.4,1186.5 1489.3,1186.3 1494.2,1186.3 C1499.1,1186.3 1504.0,1192.5 1508.9,1195.4 C1513.8,1198.3 1518.7,1203.7 1523.7,1203.7 C1528.6,1203.7 1533.5,1180.0 1538.4,1180.0 C1543.3,1180.0 1548.2,1191.6 1553.1,1191.8 C1558.0,1191.9 1562.9,1191.8 1567.8,1191.9 C1572.7,1192.0 1577.6,1195.6 1582.5,1196.5 C1587.4,1197.4 1592.3,1197.9 1597.2,1197.9 C1602.1,1197.9 1607.0,1189.1 1611.9,1189.1 C1616.8,1189.1 1621.7,1189.7 1626.6,1190.9 C1631.5,1192.0 1636.4,1203.1 1641.3,1203.1 C1646.2,1203.1 1651.1,1179.6 1656.0,1179.6 C1660.9,1179.6 1665.8,1190.9 1670.8,1190.9 C1675.7,1190.9 1680.6,1185.3 1685.5,1183.5 C1690.4,1181.8 1695.3,1180.5 1700.2,1180.5 C1705.1,1180.5 1710.0,1184.1 1714.9,1184.1 C1719.8,1184.1 1724.7,1184.1 1729.6,1184.1 C1734.5,1184.1 1739.4,1187.4 1744.3,1187.4 C1749.2,1187.4 1754.1,1186.6 1759.0,1185.6 C1763.9,1184.5 1768.8,1181.1 1773.7,1181.1 C1778.6,1181.1 1783.5,1187.0 1788.4,1188.5 C1793.3,1190.0 1798.2,1190.8 1803.1,1190.8 C1808.0,1190.8 1812.9,1186.2 1817.9,1184.8 C1822.8,1183.5 1827.7,1183.7 1832.6,1182.6 C1837.5,1181.4 1842.4,1177.9 1847.3,1177.9 C1852.2,1177.9 1857.1,1189.1 1862.0,1190.8 C1866.9,1192.5 1871.8,1193.3 1876.7,1193.3 C1881.6,1193.3 1886.5,1190.8 1891.4,1190.8 C1896.3,1190.8 1901.2,1195.5 1906.1,1195.5 C1911.0,1195.5 1915.9,1188.2 1920.8,1187.4 C1925.7,1186.7 1930.6,1186.3 1935.5,1186.3 C1940.4,1186.3 1945.3,1203.9 1950.2,1203.9 C1955.1,1203.9 1960.0,1191.9 1965.0,1191.9 C1969.9,1191.9 1974.8,1195.8 1979.7,1195.8 C1984.6,1195.8 1989.5,1191.9 1994.4,1191.9 C1999.3,1191.9 2004.2,1192.7 2009.1,1193.3 C2014.0,1193.9 2018.9,1194.9 2023.8,1195.6 L2023.8,1297.8 L1141.2,1297.8 Z" fill="#5894ee"/></g>
<text x="1144.0" y="1370.9" font-size="25" fill="#6e9fff" textLength="68.0" lengthAdjust="spacingAndGlyphs" stroke="#6e9fff" stroke-width="0.8">Name</text>
<text x="2016.5" y="1370.9" font-size="25" fill="#6e9fff" text-anchor="end" textLength="83.0" lengthAdjust="spacingAndGlyphs" stroke="#6e9fff" stroke-width="0.8">95th %</text>
<path d="M2026.7,1361.4 l5,5 l5,-5" stroke="#6e9fff" stroke-width="2.3" fill="none" stroke-linecap="round" stroke-linejoin="round"/>
<rect x="1085" y="1387" width="965" height="2" fill="#33363b"/>
<rect x="1085" y="1434" width="965" height="2" fill="#33363b"/>
<rect x="1085" y="1482" width="965" height="2" fill="#33363b"/>
<rect x="1085" y="1529" width="965" height="2" fill="#33363b"/>
<rect x="1101.5" y="1407.5" width="28.2" height="8" rx="4" fill="#73a5ff"/>
<text x="1144.0" y="1419.5" font-size="26" fill="#ccccdc" textLength="268.0" lengthAdjust="spacingAndGlyphs">pool-tpvwuymt1-62xgx</text>
<text x="2032.5" y="1419.5" font-size="26" fill="#ccccdc" text-anchor="end" textLength="74.0" lengthAdjust="spacing">5.80%</text>
<rect x="1101.5" y="1455" width="28.2" height="8" rx="4" fill="#5f98f5"/>
<text x="1144.0" y="1467.0" font-size="26" fill="#ccccdc" textLength="264.0" lengthAdjust="spacingAndGlyphs">pool-tpvwuymt1-62xgf</text>
<text x="2032.5" y="1467.0" font-size="26" fill="#ccccdc" text-anchor="end" textLength="74.0" lengthAdjust="spacing">3.39%</text>
<rect x="1101.5" y="1502" width="28.2" height="8" rx="4" fill="#3d87ee"/>
<text x="1144.0" y="1514.0" font-size="26" fill="#ccccdc" textLength="268.5" lengthAdjust="spacingAndGlyphs">pool-tpvwuymt1-62xgy</text>
<text x="2032.5" y="1514.0" font-size="26" fill="#ccccdc" text-anchor="end" textLength="69.5" lengthAdjust="spacing">1.52%</text>
<rect x="2175" y="888.5" width="878.4" height="2" fill="rgba(204,204,220,0.09)"/>
<rect x="2175" y="990.2" width="878.4" height="2" fill="rgba(204,204,220,0.09)"/>
<rect x="2175" y="1092.2" width="878.4" height="2" fill="rgba(204,204,220,0.09)"/>
<rect x="2175" y="1195.5" width="878.4" height="2" fill="rgba(204,204,220,0.09)"/>
<rect x="2175" y="1296.8" width="878.4" height="2" fill="rgba(204,204,220,0.09)"/>
<rect x="2251.6" y="849" width="2" height="454.5" fill="rgba(204,204,220,0.09)"/>
<rect x="2397.8" y="849" width="2" height="454.5" fill="rgba(204,204,220,0.09)"/>
<rect x="2544.0" y="849" width="2" height="454.5" fill="rgba(204,204,220,0.09)"/>
<rect x="2690.2" y="849" width="2" height="454.5" fill="rgba(204,204,220,0.09)"/>
<rect x="2836.4" y="849" width="2" height="454.5" fill="rgba(204,204,220,0.09)"/>
<rect x="2982.6" y="849" width="2" height="454.5" fill="rgba(204,204,220,0.09)"/>
<text x="2163.5" y="896.5" font-size="26" fill="#ccccdc" text-anchor="end" textLength="51.5" lengthAdjust="spacingAndGlyphs">20%</text>
<text x="2163.5" y="998.2" font-size="26" fill="#ccccdc" text-anchor="end" textLength="47.0" lengthAdjust="spacingAndGlyphs">15%</text>
<text x="2163.5" y="1100.2" font-size="26" fill="#ccccdc" text-anchor="end" textLength="47.0" lengthAdjust="spacingAndGlyphs">10%</text>
<text x="2163.5" y="1203.5" font-size="26" fill="#ccccdc" text-anchor="end" textLength="36.0" lengthAdjust="spacingAndGlyphs">5%</text>
<text x="2163.5" y="1304.8" font-size="26" fill="#ccccdc" text-anchor="end" textLength="37.0" lengthAdjust="spacingAndGlyphs">0%</text>
<text x="2252.6" y="1334.6" font-size="26" fill="#ccccdc" text-anchor="middle" textLength="63.0" lengthAdjust="spacingAndGlyphs">14:30</text>
<text x="2398.8" y="1334.6" font-size="26" fill="#ccccdc" text-anchor="middle" textLength="63.0" lengthAdjust="spacingAndGlyphs">14:40</text>
<text x="2545.0" y="1334.6" font-size="26" fill="#ccccdc" text-anchor="middle" textLength="63.0" lengthAdjust="spacingAndGlyphs">14:50</text>
<text x="2691.2" y="1334.6" font-size="26" fill="#ccccdc" text-anchor="middle" textLength="63.0" lengthAdjust="spacingAndGlyphs">15:00</text>
<text x="2837.4" y="1334.6" font-size="26" fill="#ccccdc" text-anchor="middle" textLength="63.0" lengthAdjust="spacingAndGlyphs">15:10</text>
<text x="2983.6" y="1334.6" font-size="26" fill="#ccccdc" text-anchor="middle" textLength="63.0" lengthAdjust="spacingAndGlyphs">15:20</text>
<clipPath id="c3"><rect x="2175.2" y="840" width="880" height="470"/></clipPath>
<g clip-path="url(#c3)" fill="none" stroke-width="2.6" stroke-linejoin="round"><path d="M2164.1,1206.0 C2169.0,1207.3 2173.8,1208.6 2178.7,1210.0 C2183.6,1211.4 2188.4,1214.5 2193.3,1214.5 C2198.2,1214.5 2203.1,1213.5 2207.9,1213.5 C2212.8,1213.5 2217.7,1215.4 2222.6,1216.0 C2227.4,1216.6 2232.3,1216.5 2237.2,1217.0 C2242.1,1217.5 2246.9,1218.7 2251.8,1218.7 C2256.7,1218.7 2261.5,1218.7 2266.4,1218.7 C2271.3,1218.7 2276.2,1201.7 2281.0,1201.7 C2285.9,1201.7 2290.8,1209.4 2295.7,1211.7 C2300.5,1214.0 2305.4,1215.8 2310.3,1215.8 C2315.2,1215.8 2320.0,1215.8 2324.9,1215.8 C2329.8,1215.8 2334.6,1206.7 2339.5,1206.7 C2344.4,1206.7 2349.3,1214.8 2354.1,1214.8 C2359.0,1214.8 2363.9,1213.5 2368.8,1211.7 C2373.6,1209.9 2378.5,1207.2 2383.4,1204.2 C2388.3,1201.2 2393.1,1193.6 2398.0,1193.6 C2402.9,1193.6 2407.7,1214.8 2412.6,1214.8 C2417.5,1214.8 2422.4,1199.8 2427.2,1199.8 C2432.1,1199.8 2437.0,1214.8 2441.9,1214.8 C2446.7,1214.8 2451.6,1210.0 2456.5,1210.0 C2461.4,1210.0 2466.2,1216.0 2471.1,1216.0 C2476.0,1216.0 2480.8,1207.7 2485.7,1207.7 C2490.6,1207.7 2495.5,1212.0 2500.3,1212.0 C2505.2,1212.0 2510.1,1210.8 2515.0,1210.8 C2519.8,1210.8 2524.7,1211.1 2529.6,1211.7 C2534.5,1212.3 2539.3,1215.0 2544.2,1215.0 C2549.1,1215.0 2553.9,1214.1 2558.8,1213.8 C2563.7,1213.5 2568.6,1212.9 2573.4,1212.9 C2578.3,1212.9 2583.2,1219.1 2588.1,1219.1 C2592.9,1219.1 2597.8,1212.9 2602.7,1212.9 C2607.6,1212.9 2612.4,1214.5 2617.3,1215.0 C2622.2,1215.5 2627.0,1216.0 2631.9,1216.0 C2636.8,1216.0 2641.7,1212.9 2646.5,1212.9 C2651.4,1212.9 2656.3,1217.0 2661.2,1217.0 C2666.0,1217.0 2670.9,1213.8 2675.8,1213.8 C2680.7,1213.8 2685.5,1216.4 2690.4,1217.0 C2695.3,1217.6 2700.1,1217.9 2705.0,1217.9 C2709.9,1217.9 2714.8,1210.8 2719.6,1210.8 C2724.5,1210.8 2729.4,1213.3 2734.3,1213.3 C2739.1,1213.3 2744.0,1208.8 2748.9,1208.8 C2753.8,1208.8 2758.6,1214.1 2763.5,1214.4 C2768.4,1214.7 2773.2,1214.6 2778.1,1214.8 C2783.0,1215.0 2787.9,1215.1 2792.7,1215.8 C2797.6,1216.5 2802.5,1220.7 2807.4,1220.7 C2812.2,1220.7 2817.1,1214.8 2822.0,1214.8 C2826.9,1214.8 2831.7,1214.8 2836.6,1214.8 C2841.5,1214.8 2846.3,1217.7 2851.2,1217.7 C2856.1,1217.7 2861.0,1205.8 2865.8,1205.8 C2870.7,1205.8 2875.6,1217.7 2880.5,1217.7 C2885.3,1217.7 2890.2,1217.0 2895.1,1216.7 C2900.0,1216.4 2904.8,1216.4 2909.7,1215.8 C2914.6,1215.2 2919.4,1211.8 2924.3,1211.8 C2929.2,1211.8 2934.1,1212.1 2938.9,1212.7 C2943.8,1213.3 2948.7,1218.8 2953.6,1218.8 C2958.4,1218.8 2963.3,1213.5 2968.2,1213.5 C2973.1,1213.5 2977.9,1218.0 2982.8,1218.0 C2987.7,1218.0 2992.5,1212.2 2997.4,1212.2 C3002.3,1212.2 3007.2,1212.2 3012.0,1212.2 C3016.9,1212.2 3021.8,1216.7 3026.7,1216.7 C3031.5,1216.7 3036.4,1213.7 3041.3,1212.2" stroke="#3d87ee"/><path d="M2164.1,1110.0 C2169.0,1114.1 2173.8,1122.2 2178.7,1122.2 C2183.6,1122.2 2188.4,1102.6 2193.3,1102.6 C2198.2,1102.6 2203.1,1121.6 2207.9,1121.6 C2212.8,1121.6 2217.7,1116.4 2222.6,1112.9 C2227.4,1109.4 2232.3,1100.8 2237.2,1100.8 C2242.1,1100.8 2246.9,1120.4 2251.8,1120.4 C2256.7,1120.4 2261.5,1119.8 2266.4,1118.5 C2271.3,1117.2 2276.2,1100.8 2281.0,1100.8 C2285.9,1100.8 2290.8,1101.7 2295.7,1103.6 C2300.5,1105.5 2305.4,1117.9 2310.3,1117.9 C2315.2,1117.9 2320.0,1117.9 2324.9,1117.9 C2329.8,1117.9 2334.6,1122.2 2339.5,1122.2 C2344.4,1122.2 2349.3,1101.7 2354.1,1101.7 C2359.0,1101.7 2363.9,1112.5 2368.8,1115.4 C2373.6,1118.3 2378.5,1119.0 2383.4,1119.7 C2388.3,1120.4 2393.1,1120.7 2398.0,1120.7 C2402.9,1120.7 2407.7,1107.9 2412.6,1107.9 C2417.5,1107.9 2422.4,1112.0 2427.2,1112.0 C2432.1,1112.0 2437.0,1100.8 2441.9,1100.8 C2446.7,1100.8 2451.6,1126.8 2456.5,1126.8 C2461.4,1126.8 2466.2,1116.1 2471.1,1114.8 C2476.0,1113.5 2480.8,1114.2 2485.7,1112.9 C2490.6,1111.6 2495.5,1101.5 2500.3,1100.8 C2505.2,1100.1 2510.1,1099.8 2515.0,1099.8 C2519.8,1099.8 2524.7,1110.8 2529.6,1116.0 C2534.5,1121.2 2539.3,1130.7 2544.2,1130.7 C2549.1,1130.7 2553.9,1088.6 2558.8,1088.6 C2563.7,1088.6 2568.6,1109.3 2573.4,1109.5 C2578.3,1109.7 2583.2,1109.6 2588.1,1109.8 C2592.9,1110.0 2597.8,1116.2 2602.7,1117.9 C2607.6,1119.6 2612.4,1120.4 2617.3,1120.4 C2622.2,1120.4 2627.0,1104.8 2631.9,1104.8 C2636.8,1104.8 2641.7,1105.8 2646.5,1107.9 C2651.4,1110.0 2656.3,1129.7 2661.2,1129.7 C2666.0,1129.7 2670.9,1088.0 2675.8,1088.0 C2680.7,1088.0 2685.5,1107.9 2690.4,1107.9 C2695.3,1107.9 2700.1,1098.0 2705.0,1094.9 C2709.9,1091.8 2714.8,1089.6 2719.6,1089.6 C2724.5,1089.6 2729.4,1095.9 2734.3,1095.9 C2739.1,1095.9 2744.0,1095.9 2748.9,1095.9 C2753.8,1095.9 2758.6,1101.8 2763.5,1101.8 C2768.4,1101.8 2773.2,1100.4 2778.1,1098.5 C2783.0,1096.6 2787.9,1090.6 2792.7,1090.6 C2797.6,1090.6 2802.5,1101.1 2807.4,1103.8 C2812.2,1106.5 2817.1,1107.8 2822.0,1107.8 C2826.9,1107.8 2831.7,1099.6 2836.6,1097.2 C2841.5,1094.8 2846.3,1095.2 2851.2,1093.2 C2856.1,1091.2 2861.0,1084.9 2865.8,1084.9 C2870.7,1084.9 2875.6,1104.9 2880.5,1107.8 C2885.3,1110.7 2890.2,1112.2 2895.1,1112.2 C2900.0,1112.2 2904.8,1107.8 2909.7,1107.8 C2914.6,1107.8 2919.4,1116.2 2924.3,1116.2 C2929.2,1116.2 2934.1,1103.1 2938.9,1101.8 C2943.8,1100.5 2948.7,1099.8 2953.6,1099.8 C2958.4,1099.8 2963.3,1131.0 2968.2,1131.0 C2973.1,1131.0 2977.9,1109.8 2982.8,1109.8 C2987.7,1109.8 2992.5,1116.7 2997.4,1116.7 C3002.3,1116.7 3007.2,1109.8 3012.0,1109.8 C3016.9,1109.8 3021.8,1111.1 3026.7,1112.2 C3031.5,1113.3 3036.4,1115.0 3041.3,1116.4" stroke="#5894ee"/><path d="M2164.1,985.0 C2169.0,995.6 2173.8,1016.7 2178.7,1016.7 C2183.6,1016.7 2188.4,929.0 2193.3,929.0 C2198.2,929.0 2203.1,972.3 2207.9,978.0 C2212.8,983.7 2217.7,983.9 2222.6,986.5 C2227.4,989.1 2232.3,993.7 2237.2,993.7 C2242.1,993.7 2246.9,963.0 2251.8,963.0 C2256.7,963.0 2261.5,978.2 2266.4,978.2 C2271.3,978.2 2276.2,894.9 2281.0,894.9 C2285.9,894.9 2290.8,985.6 2295.7,985.6 C2300.5,985.6 2305.4,955.8 2310.3,955.8 C2315.2,955.8 2320.0,995.1 2324.9,996.2 C2329.8,997.3 2334.6,996.7 2339.5,997.8 C2344.4,998.9 2349.3,1011.7 2354.1,1011.7 C2359.0,1011.7 2363.9,1007.1 2368.8,998.0 C2373.6,988.9 2378.5,952.7 2383.4,952.7 C2388.3,952.7 2393.1,1028.5 2398.0,1028.5 C2402.9,1028.5 2407.7,978.8 2412.6,978.8 C2417.5,978.8 2422.4,1007.4 2427.2,1007.4 C2432.1,1007.4 2437.0,971.0 2441.9,971.0 C2446.7,971.0 2451.6,1029.1 2456.5,1029.1 C2461.4,1029.1 2466.2,958.9 2471.1,958.9 C2476.0,958.9 2480.8,1004.0 2485.7,1008.0 C2490.6,1012.0 2495.5,1014.0 2500.3,1014.0 C2505.2,1014.0 2510.1,978.8 2515.0,978.8 C2519.8,978.8 2524.7,1004.9 2529.6,1004.9 C2534.5,1004.9 2539.3,993.7 2544.2,993.7 C2549.1,993.7 2553.9,1001.8 2558.8,1001.8 C2563.7,1001.8 2568.6,959.8 2573.4,959.8 C2578.3,959.8 2583.2,988.7 2588.1,988.7 C2592.9,988.7 2597.8,971.0 2602.7,971.0 C2607.6,971.0 2612.4,1000.8 2617.3,1000.8 C2622.2,1000.8 2627.0,992.8 2631.9,988.1 C2636.8,983.4 2641.7,972.6 2646.5,972.6 C2651.4,972.6 2656.3,1006.8 2661.2,1006.8 C2666.0,1006.8 2670.9,1006.0 2675.8,1004.3 C2680.7,1002.6 2685.5,994.9 2690.4,991.8 C2695.3,988.7 2700.1,989.7 2705.0,985.6 C2709.9,981.5 2714.8,953.9 2719.6,953.9 C2724.5,953.9 2729.4,959.9 2734.3,968.2 C2739.1,976.5 2744.0,1003.8 2748.9,1003.8 C2753.8,1003.8 2758.6,954.9 2763.5,954.9 C2768.4,954.9 2773.2,995.3 2778.1,995.3 C2783.0,995.3 2787.9,992.7 2792.7,992.7 C2797.6,992.7 2802.5,1013.0 2807.4,1013.0 C2812.2,1013.0 2817.1,1008.6 2822.0,1008.6 C2826.9,1008.6 2831.7,1011.9 2836.6,1011.9 C2841.5,1011.9 2846.3,917.7 2851.2,917.7 C2856.1,917.7 2861.0,965.7 2865.8,965.7 C2870.7,965.7 2875.6,942.3 2880.5,942.3 C2885.3,942.3 2890.2,983.8 2895.1,983.8 C2900.0,983.8 2904.8,958.2 2909.7,958.2 C2914.6,958.2 2919.4,960.2 2924.3,964.2 C2929.2,968.2 2934.1,1005.5 2938.9,1005.5 C2943.8,1005.5 2948.7,1005.0 2953.6,1005.0 C2958.4,1005.0 2963.3,1009.5 2968.2,1009.5 C2973.1,1009.5 2977.9,984.0 2982.8,984.0 C2987.7,984.0 2992.5,1027.5 2997.4,1027.5 C3002.3,1027.5 3007.2,976.8 3012.0,976.8 C3016.9,976.8 3021.8,1001.0 3026.7,1001.0 C3031.5,1001.0 3036.4,984.4 3041.3,976.1" stroke="#6d9fff"/></g>
<text x="2163.4" y="1371.7" font-size="25" fill="#6e9fff" textLength="68.0" lengthAdjust="spacingAndGlyphs" stroke="#6e9fff" stroke-width="0.8">Name</text>
<text x="3036.5" y="1371.7" font-size="25" fill="#6e9fff" text-anchor="end" textLength="83.0" lengthAdjust="spacingAndGlyphs" stroke="#6e9fff" stroke-width="0.8">95th %</text>
<path d="M3046.7,1362.2 l5,5 l5,-5" stroke="#6e9fff" stroke-width="2.3" fill="none" stroke-linecap="round" stroke-linejoin="round"/>
<rect x="2103" y="1387" width="967" height="2" fill="#33363b"/>
<rect x="2103" y="1434" width="967" height="2" fill="#33363b"/>
<rect x="2103" y="1482" width="967" height="2" fill="#33363b"/>
<rect x="2103" y="1530" width="967" height="2" fill="#33363b"/>
<rect x="2119.8" y="1407.5" width="28.2" height="8" rx="4" fill="#73a5ff"/>
<text x="2163.4" y="1419.5" font-size="26" fill="#ccccdc" textLength="268.0" lengthAdjust="spacingAndGlyphs">pool-tpvwuymt1-62xgx</text>
<text x="3052.5" y="1419.5" font-size="26" fill="#ccccdc" text-anchor="end" textLength="66.5" lengthAdjust="spacing">17.4%</text>
<rect x="2119.8" y="1455" width="28.2" height="8" rx="4" fill="#5f98f5"/>
<text x="2163.4" y="1467.0" font-size="26" fill="#ccccdc" textLength="264.0" lengthAdjust="spacingAndGlyphs">pool-tpvwuymt1-62xgf</text>
<text x="3052.5" y="1467.0" font-size="26" fill="#ccccdc" text-anchor="end" textLength="70.0" lengthAdjust="spacing">10.2%</text>
<rect x="2119.8" y="1502" width="28.2" height="8" rx="4" fill="#3d87ee"/>
<text x="2163.4" y="1514.0" font-size="26" fill="#ccccdc" textLength="268.5" lengthAdjust="spacingAndGlyphs">pool-tpvwuymt1-62xgy</text>
<text x="3052.5" y="1514.0" font-size="26" fill="#ccccdc" text-anchor="end" textLength="74.0" lengthAdjust="spacing">4.55%</text>
<text x="66.5" y="1609.7" font-size="28" fill="#ccccdc" textLength="88.0" lengthAdjust="spacingAndGlyphs" stroke="#ccccdc" stroke-width="0.8">Nodes</text>
<g stroke="#8f919b" fill="none"><circle cx="201.5" cy="1600" r="11.9" stroke-width="2.7"/></g><circle cx="201.5" cy="1595.4" r="1.9" fill="#8f919b"/><rect x="199.9" y="1599.4" width="3.2" height="6.8" rx="1.5" fill="#8f919b"/>
<text x="84.3" y="1685.5" font-size="23" fill="#ccccdc" font-weight="700" textLength="62.0" lengthAdjust="spacingAndGlyphs">NODE</text>
<text x="581.0" y="1685.5" font-size="23" fill="#ccccdc" font-weight="700" textLength="29.0" lengthAdjust="spacingAndGlyphs">OS</text>
<text x="1078.9" y="1685.5" font-size="23" fill="#ccccdc" font-weight="700" textLength="195.0" lengthAdjust="spacingAndGlyphs">CAPACITY (VCPU)</text>
<text x="1576.6" y="1685.5" font-size="23" fill="#ccccdc" font-weight="700" textLength="138.0" lengthAdjust="spacingAndGlyphs">USAGE (P95)</text>
<text x="2073.6" y="1685.5" font-size="23" fill="#ccccdc" font-weight="700" textLength="291.0" lengthAdjust="spacingAndGlyphs">USAGE/CAPACITY (P95, %)</text>
<text x="2571.0" y="1685.5" font-size="23" fill="#ccccdc" font-weight="700" textLength="77.0" lengthAdjust="spacingAndGlyphs">EXISTS</text>
<rect x="67" y="1704" width="2985" height="2" fill="#33363b"/>
<text x="84.0" y="1766.0" font-size="29" fill="#6e9fff" textLength="312.0" lengthAdjust="spacingAndGlyphs" stroke="#6e9fff" stroke-width="0.8">pool-tpvwuymt1-62xgf</text>
<text x="581.0" y="1766.0" font-size="29" fill="#ccccdc" textLength="457.0" lengthAdjust="spacingAndGlyphs">Debian GNU/Linux 12 (bookworm)</text>
<text x="1078.9" y="1766.0" font-size="29" fill="#ccccdc" textLength="100.0" lengthAdjust="spacingAndGlyphs">2 cores</text>
<text x="1576.6" y="1766.0" font-size="29" fill="#ccccdc" textLength="145.0" lengthAdjust="spacingAndGlyphs">0.20 cores</text>
<text x="2073.6" y="1766.0" font-size="29" fill="#ffb357" textLength="88.0" lengthAdjust="spacingAndGlyphs">10.17%</text>
<rect x="2571" y="1755" width="481" height="4" fill="#c0d6ff"/><rect x="2571" y="1759" width="481" height="22.6" fill="#3e4550"/>
<text x="84.0" y="1838.5" font-size="29" fill="#6e9fff" textLength="317.0" lengthAdjust="spacingAndGlyphs" stroke="#6e9fff" stroke-width="0.8">pool-tpvwuymt1-62xgx</text>
<text x="581.0" y="1838.5" font-size="29" fill="#ccccdc" textLength="457.0" lengthAdjust="spacingAndGlyphs">Debian GNU/Linux 12 (bookworm)</text>
<text x="1078.9" y="1838.5" font-size="29" fill="#ccccdc" textLength="100.0" lengthAdjust="spacingAndGlyphs">2 cores</text>
<text x="1576.6" y="1838.5" font-size="29" fill="#ccccdc" textLength="145.0" lengthAdjust="spacingAndGlyphs">0.35 cores</text>
<text x="2073.6" y="1838.5" font-size="29" fill="#ffb357" textLength="95.0" lengthAdjust="spacingAndGlyphs">17.44%</text>
<rect x="2571" y="1827" width="481" height="4" fill="#c0d6ff"/><rect x="2571" y="1831" width="481" height="22.6" fill="#3e4550"/>
<text x="84.0" y="1910.0" font-size="29" fill="#6e9fff" textLength="317.0" lengthAdjust="spacingAndGlyphs" stroke="#6e9fff" stroke-width="0.8">pool-tpvwuymt1-62xgy</text>
<text x="581.0" y="1910.0" font-size="29" fill="#ccccdc" textLength="457.0" lengthAdjust="spacingAndGlyphs">Debian GNU/Linux 12 (bookworm)</text>
<text x="1078.9" y="1910.0" font-size="29" fill="#ccccdc" textLength="100.0" lengthAdjust="spacingAndGlyphs">2 cores</text>
<text x="1576.6" y="1910.0" font-size="29" fill="#ccccdc" textLength="145.0" lengthAdjust="spacingAndGlyphs">0.09 cores</text>
<text x="2073.6" y="1910.0" font-size="29" fill="#ffb357" textLength="86.0" lengthAdjust="spacingAndGlyphs">4.56%</text>
<rect x="2571" y="1899" width="481" height="4" fill="#c0d6ff"/><rect x="2571" y="1903" width="481" height="22.6" fill="#3e4550"/>
<rect x="67" y="1791" width="2985" height="2" fill="#33363b"/>
<rect x="67" y="1864" width="2985" height="2" fill="#33363b"/>
<rect x="67" y="1936" width="2985" height="2" fill="#33363b"/>
</svg>
</body></html>
